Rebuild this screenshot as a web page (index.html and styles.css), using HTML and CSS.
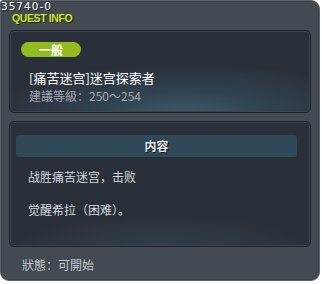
FILE: index.html
```html
<!DOCTYPE html>
<html lang="en">
<head>
    <meta charset="UTF-8">
    <meta name="viewport" content="width=device-width, initial-scale=1.0">
    <title>Quest Info</title>
    <link rel="stylesheet" href="styles.css">
</head>
<body>
    <div class="window">
        <div class="quest-id">35740-0</div>
        <div class="window-title">QUEST INFO</div>

        <div class="panel summary">
            <div class="badge">一般</div>
            <div class="quest-name">[痛苦迷宫]迷宫探索者</div>
            <div class="level">建議等級：250～254</div>
        </div>

        <div class="panel details">
            <div class="section-head">内容</div>
            <p class="desc">战胜痛苦迷宫，击败</p>
            <p class="desc">觉醒希拉（困难）。</p>
        </div>

        <div class="status">狀態：可開始</div>
    </div>
</body>
</html>
```

FILE: styles.css
```css
body {
    margin: 0;
    background-color: #ffffff;
    font-family: "Noto Sans CJK SC", "Noto Sans", sans-serif;
}
.window {
    width: 318px;
    height: 279px;
    background-color: #434a52;
    border: 1px solid #5c636b;
    border-radius: 3px 9px 9px 9px;
    display: flex;
    flex-direction: column;
    box-shadow: inset 0 0 0 1px #3a4048;
}
.quest-id {
    font-family: "DejaVu Sans", sans-serif;
    font-size: 10.5px;
    line-height: 11px;
    letter-spacing: 1px;
    color: #ffffff;
    text-shadow: 1px 1px 0 #1a1d22;
}
.window-title {
    font-family: "Liberation Sans", sans-serif;
    font-weight: bold;
    font-size: 10.5px;
    line-height: 12px;
    letter-spacing: -0.4px;
    color: #cfe830;
    padding-left: 11px;
    text-shadow: 1px 1px 0 #20260a;
}
.panel {
    margin-left: 8px;
    width: 302px;
    border: 1px solid #1d2229;
    border-radius: 5px;
    box-shadow: inset 0 0 0 1px #3c4652;
    background-color: #2a303a;
}
.summary {
    margin-top: 6px;
    padding: 11px 0 0 11px;
    box-sizing: border-box;
    height: 83px;
    background: radial-gradient(ellipse 65% 60% at 58% 100%, #3a5868 0%, #31424f 45%, #2a303a 100%);
}
.badge {
    width: 60px;
    height: 15px;
    line-height: 15px;
    border-radius: 8px;
    background-color: #94bb1e;
    color: #ffffff;
    font-weight: bold;
    font-size: 12px;
    text-align: center;
}
.quest-name {
    margin-top: 12px;
    padding-left: 8px;
    color: #ffffff;
    font-size: 13px;
    line-height: 18px;
}
.level {
    padding-left: 8px;
    color: #a3a9af;
    font-size: 12px;
    line-height: 18px;
}
.details {
    margin-top: 8px;
    height: 126px;
    box-sizing: border-box;
    padding: 13px 13px 0 6px;
    background: radial-gradient(ellipse 50% 25% at 50% 100%, #323e4a 0%, #2a303a 100%);
}
.section-head {
    height: 22px;
    line-height: 22px;
    border-radius: 3px;
    background-color: #2f4958;
    color: #e6eaee;
    font-weight: bold;
    font-size: 12px;
    text-align: center;
    text-shadow: 1px 1px 0 #151a1f;
}
.desc {
    margin: 12px 0 0 12px;
    color: #d4d8dc;
    font-size: 12px;
    line-height: 16px;
}
.desc + .desc {
    margin-top: 17px;
}
.status {
    padding: 10px 0 0 21px;
    color: #c4c9ce;
    font-size: 12px;
    line-height: 16px;
}
```
